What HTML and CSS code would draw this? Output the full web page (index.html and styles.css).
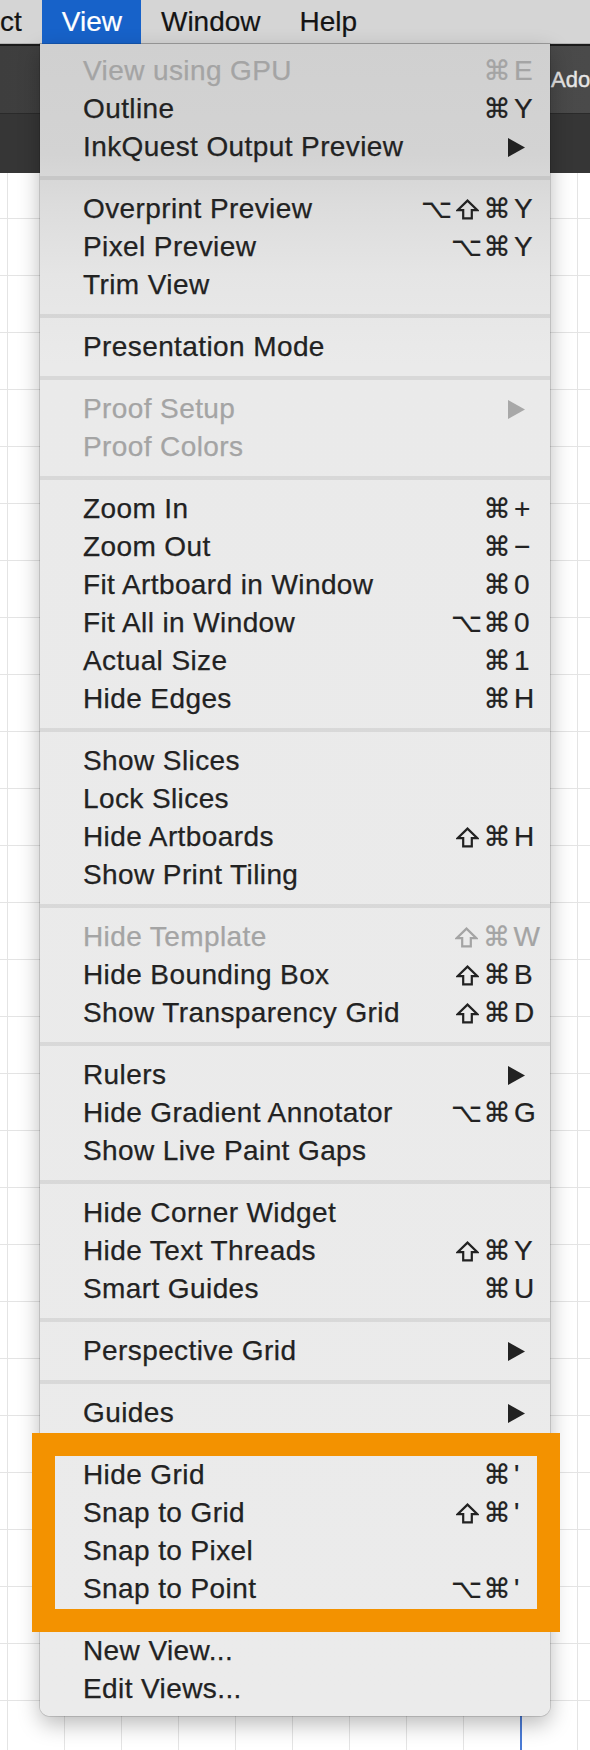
FILE: index.html
```html
<!DOCTYPE html>
<html>
<head>
<meta charset="utf-8">
<link rel="stylesheet" href="styles.css">
</head>
<body>
<div class="screen">
  <div class="menubar">
    <span class="mb-item mb-cut">ct</span>
    <span class="mb-item mb-active">View</span>
    <span class="mb-item">Window</span>
    <span class="mb-item">Help</span>
  </div>
  <div class="toolbar">
    <div class="tb-top"><span class="tb-title">Ado</span></div>
    <div class="tb-bottom"></div>
  </div>
  <div class="canvas">
    <div class="guide-line"></div>
  </div>

  <div class="menu">
    <div class="group">
      <div class="item disabled"><span class="label">View using GPU</span><span class="sc"><span class="mods"><span>⌘</span></span><span class="key">E</span></span></div>
      <div class="item"><span class="label">Outline</span><span class="sc"><span class="mods"><span>⌘</span></span><span class="key">Y</span></span></div>
      <div class="item"><span class="label">InkQuest Output Preview</span><svg class="arrow" viewBox="0 0 17 19"><path d="M0 0 L17 9.5 L0 19 Z"/></svg></div>
    </div>
    <div class="sep"></div>
    <div class="group">
      <div class="item"><span class="label">Overprint Preview</span><span class="sc"><span class="mods"><span>⌥</span><span><svg class="shift" viewBox="0 0 23 21"><path d="M11.5 1.6 L21.4 11.2 H15.8 V19.4 H7.2 V11.2 H1.6 Z"/></svg></span><span>⌘</span></span><span class="key">Y</span></span></div>
      <div class="item"><span class="label">Pixel Preview</span><span class="sc"><span class="mods"><span>⌥</span><span>⌘</span></span><span class="key">Y</span></span></div>
      <div class="item"><span class="label">Trim View</span></div>
    </div>
    <div class="sep"></div>
    <div class="group">
      <div class="item"><span class="label">Presentation Mode</span></div>
    </div>
    <div class="sep"></div>
    <div class="group">
      <div class="item disabled"><span class="label">Proof Setup</span><svg class="arrow" viewBox="0 0 17 19"><path d="M0 0 L17 9.5 L0 19 Z"/></svg></div>
      <div class="item disabled"><span class="label">Proof Colors</span></div>
    </div>
    <div class="sep"></div>
    <div class="group">
      <div class="item"><span class="label">Zoom In</span><span class="sc"><span class="mods"><span>⌘</span></span><span class="key">+</span></span></div>
      <div class="item"><span class="label">Zoom Out</span><span class="sc"><span class="mods"><span>⌘</span></span><span class="key">−</span></span></div>
      <div class="item"><span class="label">Fit Artboard in Window</span><span class="sc"><span class="mods"><span>⌘</span></span><span class="key">0</span></span></div>
      <div class="item"><span class="label">Fit All in Window</span><span class="sc"><span class="mods"><span>⌥</span><span>⌘</span></span><span class="key">0</span></span></div>
      <div class="item"><span class="label">Actual Size</span><span class="sc"><span class="mods"><span>⌘</span></span><span class="key">1</span></span></div>
      <div class="item"><span class="label">Hide Edges</span><span class="sc"><span class="mods"><span>⌘</span></span><span class="key">H</span></span></div>
    </div>
    <div class="sep"></div>
    <div class="group">
      <div class="item"><span class="label">Show Slices</span></div>
      <div class="item"><span class="label">Lock Slices</span></div>
      <div class="item"><span class="label">Hide Artboards</span><span class="sc"><span class="mods"><span><svg class="shift" viewBox="0 0 23 21"><path d="M11.5 1.6 L21.4 11.2 H15.8 V19.4 H7.2 V11.2 H1.6 Z"/></svg></span><span>⌘</span></span><span class="key">H</span></span></div>
      <div class="item"><span class="label">Show Print Tiling</span></div>
    </div>
    <div class="sep"></div>
    <div class="group">
      <div class="item disabled"><span class="label">Hide Template</span><span class="sc"><span class="mods"><span><svg class="shift" viewBox="0 0 23 21"><path d="M11.5 1.6 L21.4 11.2 H15.8 V19.4 H7.2 V11.2 H1.6 Z"/></svg></span><span>⌘</span></span><span class="key">W</span></span></div>
      <div class="item"><span class="label">Hide Bounding Box</span><span class="sc"><span class="mods"><span><svg class="shift" viewBox="0 0 23 21"><path d="M11.5 1.6 L21.4 11.2 H15.8 V19.4 H7.2 V11.2 H1.6 Z"/></svg></span><span>⌘</span></span><span class="key">B</span></span></div>
      <div class="item"><span class="label">Show Transparency Grid</span><span class="sc"><span class="mods"><span><svg class="shift" viewBox="0 0 23 21"><path d="M11.5 1.6 L21.4 11.2 H15.8 V19.4 H7.2 V11.2 H1.6 Z"/></svg></span><span>⌘</span></span><span class="key">D</span></span></div>
    </div>
    <div class="sep"></div>
    <div class="group">
      <div class="item"><span class="label">Rulers</span><svg class="arrow" viewBox="0 0 17 19"><path d="M0 0 L17 9.5 L0 19 Z"/></svg></div>
      <div class="item"><span class="label">Hide Gradient Annotator</span><span class="sc"><span class="mods"><span>⌥</span><span>⌘</span></span><span class="key">G</span></span></div>
      <div class="item"><span class="label">Show Live Paint Gaps</span></div>
    </div>
    <div class="sep"></div>
    <div class="group">
      <div class="item"><span class="label">Hide Corner Widget</span></div>
      <div class="item"><span class="label">Hide Text Threads</span><span class="sc"><span class="mods"><span><svg class="shift" viewBox="0 0 23 21"><path d="M11.5 1.6 L21.4 11.2 H15.8 V19.4 H7.2 V11.2 H1.6 Z"/></svg></span><span>⌘</span></span><span class="key">Y</span></span></div>
      <div class="item"><span class="label">Smart Guides</span><span class="sc"><span class="mods"><span>⌘</span></span><span class="key">U</span></span></div>
    </div>
    <div class="sep"></div>
    <div class="group">
      <div class="item"><span class="label">Perspective Grid</span><svg class="arrow" viewBox="0 0 17 19"><path d="M0 0 L17 9.5 L0 19 Z"/></svg></div>
    </div>
    <div class="sep"></div>
    <div class="group">
      <div class="item"><span class="label">Guides</span><svg class="arrow" viewBox="0 0 17 19"><path d="M0 0 L17 9.5 L0 19 Z"/></svg></div>
    </div>
    <div class="sep"></div>
    <div class="group">
      <div class="item"><span class="label">Hide Grid</span><span class="sc"><span class="mods"><span>⌘</span></span><span class="key">'</span></span></div>
      <div class="item"><span class="label">Snap to Grid</span><span class="sc"><span class="mods"><span><svg class="shift" viewBox="0 0 23 21"><path d="M11.5 1.6 L21.4 11.2 H15.8 V19.4 H7.2 V11.2 H1.6 Z"/></svg></span><span>⌘</span></span><span class="key">'</span></span></div>
      <div class="item"><span class="label">Snap to Pixel</span></div>
      <div class="item"><span class="label">Snap to Point</span><span class="sc"><span class="mods"><span>⌥</span><span>⌘</span></span><span class="key">'</span></span></div>
    </div>
    <div class="sep"></div>
    <div class="group">
      <div class="item"><span class="label">New View...</span></div>
      <div class="item"><span class="label">Edit Views...</span></div>
    </div>

    <div class="highlight-frame"></div>
  </div>
</div>
</body>
</html>
```

FILE: styles.css
```css
html, body {
  margin: 0;
  padding: 0;
}
body {
  width: 590px;
  height: 1750px;
  overflow: hidden;
  font-family: "Liberation Sans", "DejaVu Sans", sans-serif;
  background: #ffffff;
}
.screen {
  position: relative;
  width: 590px;
  height: 1750px;
  display: flex;
  flex-direction: column;
  overflow: hidden;
}

/* menu bar */
.menubar {
  height: 44px;
  flex: none;
  display: flex;
  align-items: stretch;
  background: #d5d5d5;
  box-shadow: inset 0 -1px 0 #b4b4b4;
  font-size: 28px;
  line-height: 44px;
  color: #141414;
  white-space: nowrap;
  -webkit-text-stroke: 0.2px currentColor;
}
.mb-item {
  padding: 0 19px 0 20px;
}
.mb-cut {
  padding: 0 20px 0 0;
}
.mb-active {
  background: #1762c9;
  color: #ffffff;
}

/* dark toolbar */
.toolbar {
  flex: none;
  height: 129px;
  display: flex;
  flex-direction: column;
  background: #1b1b1b;
  padding-top: 2px;
  box-sizing: border-box;
}
.tb-top {
  height: 67px;
  background: linear-gradient(to right, #3e3e3e, #4a4a4a);
  display: flex;
  align-items: center;
  padding-left: 551px;
  white-space: nowrap;
}
.tb-title {
  color: #e6e6e6;
  font-size: 22px;
  -webkit-text-stroke: 0.4px currentColor;
}
.tb-bottom {
  flex: 1;
  background: #363636;
  border-top: 1px solid #2a2a2a;
}

/* canvas with grid */
.canvas {
  flex: 1;
  position: relative;
  background-color: #ffffff;
  background-image:
    linear-gradient(to right, #e4e4e4 1px, transparent 1px),
    linear-gradient(to bottom, #e4e4e4 1px, transparent 1px);
  background-size: 57px 57px;
  background-position: 7px 45px;
}
.guide-line {
  position: absolute;
  left: 520px;
  top: 0;
  bottom: 0;
  width: 2px;
  background: #4a7bd6;
}

/* dropdown menu */
.menu {
  position: absolute;
  left: 40px;
  top: 44px;
  width: 510px;
  padding: 8px 0;
  box-sizing: border-box;
  border-radius: 0 0 10px 10px;
  background: linear-gradient(to bottom,
    #d0d0d0 0px,
    #d3d3d3 110px,
    #dcdcdc 160px,
    #e5e5e5 230px,
    #eaeaea 320px,
    #ebebeb 100%);
  box-shadow: 0 0 0 1px rgba(0, 0, 0, 0.13), 0 8px 22px rgba(0, 0, 0, 0.28);
  color: #222222;
  font-size: 28px;
}
.item {
  height: 38px;
  line-height: 38px;
  display: flex;
  align-items: center;
  padding: 0 10px 0 43px;
  white-space: nowrap;
}
.label {
  flex: 1;
  letter-spacing: 0.4px;
  -webkit-text-stroke: 0.25px currentColor;
}
.item.disabled {
  color: #a4a4a4;
}
.sc {
  display: flex;
  align-items: center;
  -webkit-text-stroke: 0.2px currentColor;
}
.mods {
  display: flex;
  align-items: center;
  font-family: "DejaVu Sans", sans-serif;
  font-size: 27px;
}
.mods > span {
  display: flex;
  align-items: center;
  justify-content: center;
  min-width: 30px;
}
.shift {
  width: 23px;
  height: 21px;
  fill: none;
  stroke: currentColor;
  stroke-width: 2.2;
  stroke-linejoin: miter;
}
.key {
  display: inline-block;
  min-width: 28px;
  padding-left: 2px;
  box-sizing: border-box;
  font-family: "Liberation Sans", "DejaVu Sans", sans-serif;
}
.arrow {
  width: 17px;
  height: 19px;
  margin-right: 15px;
  fill: #222222;
}
.item.disabled .arrow {
  fill: #a8a8a8;
}
.sep {
  height: 24px;
  display: flex;
  align-items: center;
}
.sep::before {
  content: "";
  display: block;
  width: 100%;
  height: 4px;
  background: rgba(0, 0, 0, 0.075);
}

/* orange annotation frame over the menu */
.highlight-frame {
  position: absolute;
  left: -8px;
  top: 1389px;
  width: 528px;
  height: 199px;
  box-sizing: border-box;
  border: 23px solid #f39200;
  pointer-events: none;
}
```
